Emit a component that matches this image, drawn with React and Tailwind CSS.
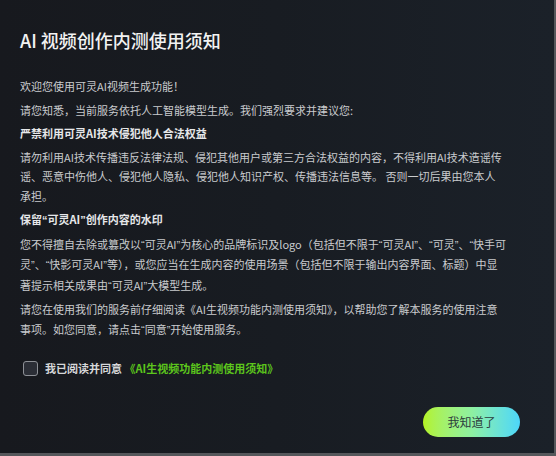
import React, { useState } from 'react';

// narrow latin-style curly quotes like the reference
const Q = ({ children }) => (
  <>
    <span className="font-['Liberation_Sans']">“</span>
    {children}
    <span className="font-['Liberation_Sans']">”</span>
  </>
);

export default function App() {
  const [agreed, setAgreed] = useState(false);

  return (
    <div className="w-[556px] h-[456px] bg-[#55575b]" style={{ fontFamily: '"Noto Sans CJK SC", "Noto Sans", sans-serif' }}>
      <div className="w-[554px] h-[453px] bg-gradient-to-r from-[#17191e] via-[#181c22] to-[#1b2129] flex flex-col px-5 pt-[27px]">
        {/* Title */}
        <h1 className="text-[18px] leading-[26px] text-[#f2f2f2] font-medium">AI 视频创作内测使用须知</h1>

        {/* Body */}
        <div className="mt-[24px] flex flex-col gap-[4px] text-[11px] leading-[19.5px] text-[#c9cbce] whitespace-nowrap">
          <p>欢迎您使用可灵AI视频生成功能！</p>
          <p>请您知悉，当前服务依托人工智能模型生成。我们强烈要求并建议您:</p>
          <p className="font-bold text-[#e6e7e9]">严禁利用可灵AI技术侵犯他人合法权益</p>
          <p>
            请勿利用AI技术传播违反法律法规、侵犯其他用户或第三方合法权益的内容，不得利用AI技术造谣传
            <br />
            谣、恶意中伤他人、侵犯他人隐私、侵犯他人知识产权、传播违法信息等。 否则一切后果由您本人
            <br />
            承担。
          </p>
          <p className="font-bold text-[#e6e7e9]">保留<Q>可灵AI</Q>创作内容的水印</p>
          <p>
            您不得擅自去除或篡改以<Q>可灵AI</Q>为核心的品牌标识及logo（包括但不限于<Q>可灵AI</Q>、<Q>可灵</Q>、<span className="font-['Liberation_Sans']">“</span>快手可
            <br />
            灵<span className="font-['Liberation_Sans']">”</span>、<Q>快影可灵AI</Q>等），或您应当在生成内容的使用场景（包括但不限于输出内容界面、标题）中显
            <br />
            著提示相关成果由<Q>可灵AI</Q>大模型生成。
          </p>
          <p>
            请您在使用我们的服务前仔细阅读《AI生视频功能内测使用须知》，以帮助您了解本服务的使用注意
            <br />
            事项。如您同意，请点击<Q>同意</Q>开始使用服务。
          </p>
        </div>

        {/* Agreement */}
        <label className="mt-[20px] ml-[3px] flex items-center gap-[7px] cursor-pointer select-none">
          <span
            onClick={() => setAgreed(!agreed)}
            className={`w-[15px] h-[15px] rounded-[3px] border-[1.5px] border-[#8d9096] ${agreed ? 'bg-[#5fc81f]' : 'bg-[#2b2e36]'}`}
          />
          <span className="text-[11px] font-bold text-[#d6d7d9]">
            我已阅读并同意 <span className="text-[#5cc51c]">《AI生视频功能内测使用须知》</span>
          </span>
        </label>

        {/* Button */}
        <div className="mt-auto mb-[16px] flex justify-end pr-[14px]">
          <button className="w-[97px] h-[30px] rounded-full bg-gradient-to-r from-[#b3f21d] via-[#8ef0a0] to-[#4cd6fa] text-[12px] text-[#2c3a3c]">
            我知道了
          </button>
        </div>
      </div>
    </div>
  );
}
